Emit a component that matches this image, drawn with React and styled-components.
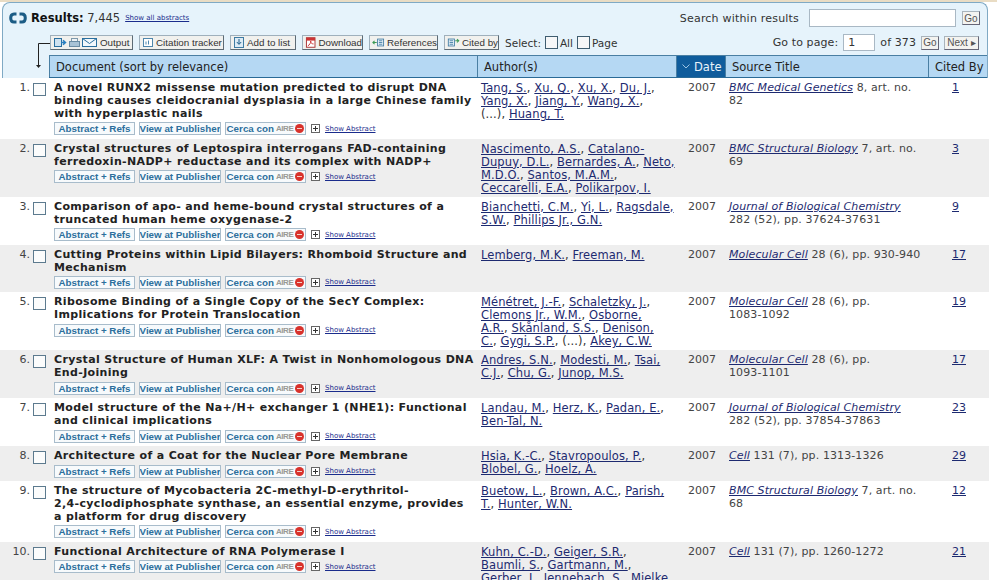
import React from 'react'
import styled, { createGlobalStyle } from 'styled-components'

const Global = createGlobalStyle`
  html, body { margin: 0; padding: 0; background: #fff; overflow: hidden; }
  body { font-family: "DejaVu Sans", Verdana, sans-serif; font-size: 11px; color: #333; }
`

const Page = styled.div`
  width: 997px;
  height: 580px;
  overflow: hidden;
  border-top: 2px solid #e9dcc4;
  box-sizing: border-box;
`

const Panel = styled.div`
  width: 986px;
  margin-left: 2px;
  background: #e6f3fb;
  border: 1px solid #7fa9c4;
  border-bottom: none;
  border-radius: 8px 8px 0 0;
  box-sizing: border-box;
`

const TopBar = styled.div`
  height: 28px;
  display: flex;
  align-items: center;
  justify-content: space-between;
  padding: 2px 7px 0 6px;
  box-sizing: border-box;
`

const ResultInfo = styled.div`
  display: flex;
  align-items: center;
  font-size: 11.5px;
  gap: 4px;
  b { color: #111; }
`

const TinyLink = styled.a`
  font-size: 7px;
  color: #1a2c8c;
  text-decoration: underline;
  margin-left: 1px;
`

const SearchBox = styled.div`
  display: flex;
  align-items: center;
  gap: 6px;
  letter-spacing: 0.2px;
`

const Input = styled.span`
  display: block;
  width: ${p => p.$w}px;
  height: ${p => p.$h || 17}px;
  margin-left: ${p => p.$ml || 0}px;
  background: #fff;
  border: 1px solid #a9b8c4;
  box-sizing: border-box;
  font-size: 11px;
  line-height: 16px;
  padding-left: 4px;
`

const SmallBtn = styled.span`
  display: inline-flex;
  align-items: center;
  justify-content: center;
  gap: 2px;
  width: ${p => p.$w}px;
  height: 14px;
  background: #f3f3f0;
  border: 1px solid #a9b4bc;
  border-right-color: #667;
  border-bottom-color: #667;
  font-family: "Liberation Sans", Arial, sans-serif;
  font-size: 10px;
  letter-spacing: 0;
  color: #555;
  box-sizing: border-box;
`

const ToolBar = styled.div`
  height: 23px;
  display: flex;
  align-items: center;
  justify-content: space-between;
  padding: 0 8px 0 47px;
  box-sizing: border-box;
`

const ToolGroup = styled.div`
  display: flex;
  align-items: center;
  gap: ${p => p.$gap}px;
  letter-spacing: ${p => p.$track || 0}px;
`

const ToolBtn = styled.span`
  display: inline-flex;
  align-items: center;
  gap: 2px;
  width: ${p => p.$w}px;
  height: 15px;
  padding-left: 2px;
  background: #f1f1ee;
  border: 1px solid #9fb0bc;
  border-right-color: #5d6b75;
  border-bottom-color: #5d6b75;
  box-sizing: border-box;
  font-family: "Liberation Sans", Arial, sans-serif;
  font-size: 9.8px;
  color: #333;
  white-space: nowrap;
  overflow: hidden;
`

const Check = styled.span`
  display: inline-block;
  width: 13px;
  height: 13px;
  background: #f6f7f8;
  border: 1px solid #3f5d70;
  box-sizing: border-box;
`

const SelectLabel = styled.span`
  display: flex;
  align-items: center;
  gap: 2px;
  font-size: 10.5px;
`

const SelectCheck = styled(Check)`
  margin-left: 2px;
`

const HeadRow = styled.div`
  position: relative;
  display: grid;
  grid-template-columns: 46px 428px 199px 49px 203px 1fr;
  height: 21px;
  border-top: 1px solid #4a7fa3;
  border-bottom: 1px solid #2a6a96;
  margin-top: 1px;
  font-size: 11.5px;
  color: #222;
`

const HeadSpacer = styled.div`
  background: #e6f3fb;
  margin-top: -1px;
  margin-bottom: -1px;
`

const HeadCell = styled.div`
  display: flex;
  align-items: center;
  background: ${p => (p.$active ? '#0f5c9c' : '#b5d8f3')};
  color: ${p => (p.$active ? '#e9f3fa' : '#222')};
  padding-left: ${p => p.$pad ?? 6}px;
  border-left: 1px solid #4a7fa3;
  gap: 4px;
  white-space: nowrap;
`

const ArrowMark = styled.svg`
  position: absolute;
  left: 27px;
  top: -14px;
`

const Row = styled.div`
  display: grid;
  grid-template-columns: 30px 24px 427px 196px 48px 204px 1fr;
  background: ${p => (p.$alt ? '#eeeeee' : '#fff')};
  padding: 4px 0 2px;
  width: 989px;
`

const Num = styled.div`
  text-align: right;
  line-height: 12.95px;
  font-size: 11px;
  color: #444;
`

const BoxCell = styled.div`
  padding: 1px 0 0 3px;
`

const RowCheck = styled(Check)`
  background: #fbfcfc;
  border-color: #5c7a8e;
`

const Title = styled.div`
  font-weight: bold;
  font-size: 11px;
  line-height: 12.95px;
  color: #222;
  letter-spacing: 0.34px;
  white-space: pre-line;
`

const Links = styled.div`
  display: flex;
  align-items: center;
  height: 16px;
  gap: 4px;
`

const LinkBtn = styled.span`
  display: inline-flex;
  align-items: center;
  justify-content: center;
  gap: 2px;
  height: 13px;
  width: ${p => p.$w}px;
  background: #f7fafc;
  border: 1px solid #a8bccb;
  box-sizing: border-box;
  font-family: "Liberation Sans", Arial, sans-serif;
  font-size: 9.8px;
  font-weight: bold;
  color: #2c6f9c;
  white-space: nowrap;
  overflow: hidden;
`

const AireMark = styled.span`
  font-size: 8px;
  font-weight: bold;
  color: #9a9a96;
  letter-spacing: -0.4px;
`

const RedDot = styled.span`
  position: relative;
  display: inline-block;
  width: 9px;
  height: 9px;
  border-radius: 50%;
  background: #d8322c;
  box-sizing: border-box;
  &::after {
    content: "";
    position: absolute;
    left: 2px;
    right: 2px;
    top: 4px;
    height: 1px;
    background: #f6d0c8;
  }
`

const Plus = styled.span`
  display: inline-block;
  width: 9px;
  height: 9px;
  border: 1px solid #666;
  box-sizing: border-box;
  margin-left: 1px;
  background:
    linear-gradient(#333, #333) center / 5px 1px no-repeat,
    linear-gradient(#333, #333) center / 1px 5px no-repeat,
    #fff;
`

const Authors = styled.div`
  line-height: 12.95px;
  font-size: 11.5px;
  letter-spacing: 0.1px;
  color: #333;
  white-space: pre;
`

const A = styled.a`
  color: #1d2a70;
  text-decoration: underline;
`

const Year = styled.div`
  line-height: 12.95px;
  padding-left: 11px;
  color: #444;
`

const Source = styled.div`
  line-height: 12.95px;
  color: #444;
  padding-left: 4px;
  letter-spacing: 0.1px;
  white-space: pre-line;
  i { color: #1d2a70; text-decoration: underline; }
`

const Cited = styled.div`
  line-height: 12.95px;
  padding-left: 23px;
`

const OutputIcons = () => (
  <svg width="45" height="11" viewBox="0 0 45 11">
    <rect x="1.5" y="1.5" width="7" height="8" fill="#cfe2f0" stroke="#2a6f9f" />
    <path d="M8 5.5h4M10 3.2l2.5 2.3L10 7.8" fill="none" stroke="#2a7fbf" strokeWidth="1.5" />
    <rect x="18.5" y="1.5" width="6" height="3" fill="#eef3f6" stroke="#7d98ab" />
    <rect x="16.5" y="4.5" width="10" height="5" fill="#a9c3d6" stroke="#6a8ca4" />
    <rect x="29.5" y="1.5" width="14" height="8" fill="#f2f8fc" stroke="#2a6f9f" />
    <path d="M29.5 1.5l7 5 7-5" fill="none" stroke="#2a6f9f" />
  </svg>
)

const TrackerIcon = () => (
  <svg width="12" height="11" viewBox="0 0 12 11">
    <rect x="1.5" y="1.5" width="9" height="8" fill="#fff" stroke="#4f87ad" />
    <path d="M4 7.5v-3M6.5 7.5v-4" stroke="#4f87ad" />
  </svg>
)

const ListIcon = () => (
  <svg width="12" height="13" viewBox="0 0 12 13">
    <rect x="1.5" y="1.5" width="9" height="10" fill="#dcebf5" stroke="#3f7ba3" />
    <path d="M6 3v5M3.8 6l2.2 2.4L8.2 6" fill="none" stroke="#1f5f8c" />
  </svg>
)

const PdfIcon = () => (
  <svg width="12" height="13" viewBox="0 0 12 13">
    <rect x="1.5" y="1.5" width="9" height="10" fill="#fff" stroke="#a33" />
    <rect x="1.5" y="1.5" width="9" height="3" fill="#c33" />
    <path d="M3 10c2-1 3-3 3-5 0 2 1 3 3 3" fill="none" stroke="#c33" />
  </svg>
)

const RefsIcon = () => (
  <svg width="15" height="11" viewBox="0 0 15 11">
    <rect x="6.5" y="1.5" width="7" height="8" fill="#eaf3f9" stroke="#3f7ba3" />
    <path d="M8 3.5h4M8 5.5h4M8 7.5h4" stroke="#3f7ba3" />
    <path d="M5.5 5.5H1M3 3.5l-2 2 2 2" fill="none" stroke="#3c9a55" strokeWidth="1.2" />
  </svg>
)

const CitedIcon = () => (
  <svg width="15" height="11" viewBox="0 0 15 11">
    <rect x="1.5" y="1.5" width="7" height="8" fill="#eaf3f9" stroke="#3f7ba3" />
    <path d="M3 3.5h4M3 5.5h4M3 7.5h4" stroke="#3f7ba3" />
    <path d="M9.5 3.5H13M11.5 1.5l2 2-2 2" fill="none" stroke="#3c9a55" strokeWidth="1.2" />
  </svg>
)

const LoopLogo = () => (
  <svg width="18" height="12" viewBox="0 0 18 12">
    <path d="M7.5 2H5Q1.7 2 1.7 6T5 10h2.5" fill="none" stroke="#1c5c85" strokeWidth="3" />
    <path d="M10.5 2H13q3.3 0 3.3 4T13 10h-2.5" fill="none" stroke="#1c5c85" strokeWidth="3" />
  </svg>
)

// line breaks are written into the names so each cell wraps where the list does
const rows = [
  {
    title: 'A novel RUNX2 missense mutation predicted to disrupt DNA binding causes cleidocranial dysplasia in a large Chinese family with hyperplastic nails',
    authors: ['Tang, S.', 'Xu, Q.', 'Xu, X.', 'Du, J.', '\nYang, X.', 'Jiang, Y.', 'Wang, X.', '\n(...)', 'Huang, T.'],
    journal: 'BMC Medical Genetics', rest: ' 8, art. no.\n82', cited: 1,
  },
  {
    title: 'Crystal structures of Leptospira interrogans FAD-containing ferredoxin-NADP+ reductase and its complex with NADP+',
    authors: ['Nascimento, A.S.', 'Catalano-\nDupuy, D.L.', 'Bernardes, A.', 'Neto,\nM.D.O.', 'Santos, M.A.M.', '\nCeccarelli, E.A.', 'Polikarpov, I.'],
    journal: 'BMC Structural Biology', rest: ' 7, art. no.\n69', cited: 3,
  },
  {
    title: 'Comparison of apo- and heme-bound crystal structures of a truncated human heme oxygenase-2',
    authors: ['Bianchetti, C.M.', 'Yi, L.', 'Ragsdale,\nS.W.', 'Phillips Jr., G.N.'],
    journal: 'Journal of Biological Chemistry', rest: '\n282 (52), pp. 37624-37631', cited: 9,
  },
  {
    title: 'Cutting Proteins within Lipid Bilayers: Rhomboid Structure and Mechanism',
    authors: ['Lemberg, M.K.', 'Freeman, M.'],
    journal: 'Molecular Cell', rest: ' 28 (6), pp. 930-940', cited: 17,
  },
  {
    title: 'Ribosome Binding of a Single Copy of the SecY Complex: Implications for Protein Translocation',
    authors: ['Ménétret, J.-F.', 'Schaletzky, J.', '\nClemons Jr., W.M.', 'Osborne,\nA.R.', 'Skånland, S.S.', 'Denison,\nC.', 'Gygi, S.P.', '(...)', 'Akey, C.W.'],
    journal: 'Molecular Cell', rest: ' 28 (6), pp.\n1083-1092', cited: 19,
  },
  {
    title: 'Crystal Structure of Human XLF: A Twist in Nonhomologous DNA End-Joining',
    authors: ['Andres, S.N.', 'Modesti, M.', 'Tsai,\nC.J.', 'Chu, G.', 'Junop, M.S.'],
    journal: 'Molecular Cell', rest: ' 28 (6), pp.\n1093-1101', cited: 17,
  },
  {
    title: 'Model structure of the Na+/H+ exchanger 1 (NHE1): Functional and clinical implications',
    authors: ['Landau, M.', 'Herz, K.', 'Padan, E.', '\nBen-Tal, N.'],
    journal: 'Journal of Biological Chemistry', rest: '\n282 (52), pp. 37854-37863', cited: 23,
  },
  {
    title: 'Architecture of a Coat for the Nuclear Pore Membrane',
    authors: ['Hsia, K.-C.', 'Stavropoulos, P.', '\nBlobel, G.', 'Hoelz, A.'],
    journal: 'Cell', rest: ' 131 (7), pp. 1313-1326', cited: 29,
  },
  {
    title: 'The structure of Mycobacteria 2C-methyl-D-erythritol-\n2,4-cyclodiphosphate synthase, an essential enzyme, provides\na platform for drug discovery',
    authors: ['Buetow, L.', 'Brown, A.C.', 'Parish,\nT.', 'Hunter, W.N.'],
    journal: 'BMC Structural Biology', rest: ' 7, art. no.\n68', cited: 12,
  },
  {
    title: 'Functional Architecture of RNA Polymerase I',
    authors: ['Kuhn, C.-D.', 'Geiger, S.R.', '\nBaumli, S.', 'Gartmann, M.', '\nGerber, J.', 'Jennebach, S.', 'Mielke,\nT.'],
    journal: 'Cell', rest: ' 131 (7), pp. 1260-1272', cited: 21,
  },
]

function AuthorName({ name }) {
  // a leading break sits outside the link, so it isn't underlined
  const lead = name.startsWith('\n') ? '\n' : ''
  const text = name.trim()
  return <>{lead}{text === '(...)' ? text : <A>{text}</A>}</>
}

function ResultRow({ row, index }) {
  return (
    <Row $alt={index % 2 === 1}>
      <Num>{index + 1}.</Num>
      <BoxCell><RowCheck /></BoxCell>
      <div>
        <Title>{row.title}</Title>
        <Links>
          <LinkBtn $w={81}>Abstract + Refs</LinkBtn>
          <LinkBtn $w={82}>View at Publisher</LinkBtn>
          <LinkBtn $w={81}>Cerca con <AireMark>AIRE</AireMark><RedDot /></LinkBtn>
          <Plus />
          <TinyLink>Show Abstract</TinyLink>
        </Links>
      </div>
      <Authors>
        {row.authors.map((a, i) => {
          const next = row.authors[i + 1]
          return (
            <React.Fragment key={a}>
              <AuthorName name={a} />
              {next ? (next.startsWith('\n') ? ',' : ', ') : ''}
            </React.Fragment>
          )
        })}
      </Authors>
      <Year>2007</Year>
      <Source><i>{row.journal}</i>{row.rest}</Source>
      <Cited><A>{row.cited}</A></Cited>
    </Row>
  )
}

export default function App() {
  return (
    <Page>
      <Global />
      <Panel>
        <TopBar>
          <ResultInfo>
            <LoopLogo />
            <span><b>Results:</b> 7,445</span>
            <TinyLink>Show all abstracts</TinyLink>
          </ResultInfo>
          <SearchBox>
            <span>Search within results</span>
            <Input $w={147} $h={18} $ml={4} />
            <SmallBtn $w={18}>Go</SmallBtn>
          </SearchBox>
        </TopBar>
        <ToolBar>
          <ToolGroup $gap={6}>
            <ToolBtn $w={83}><OutputIcons />Output</ToolBtn>
            <ToolBtn $w={85}><TrackerIcon />Citation tracker</ToolBtn>
            <ToolBtn $w={66}><ListIcon />Add to list</ToolBtn>
            <ToolBtn $w={61}><PdfIcon />Download</ToolBtn>
            <ToolBtn $w={69}><RefsIcon />References</ToolBtn>
            <ToolBtn $w={55}><CitedIcon />Cited by</ToolBtn>
            <SelectLabel>Select:<SelectCheck />All<SelectCheck />Page</SelectLabel>
          </ToolGroup>
          <ToolGroup $gap={5} $track={0.1}>
            <span>Go to page:</span>
            <Input $w={32}>1</Input>
            <span>of 373</span>
            <SmallBtn $w={18}>Go</SmallBtn>
            <SmallBtn $w={35}>Next ▸</SmallBtn>
          </ToolGroup>
        </ToolBar>
        <HeadRow>
          <HeadSpacer />
          <HeadCell>Document (sort by relevance)</HeadCell>
          <HeadCell>Author(s)</HeadCell>
          <HeadCell $active $pad={5}>
            <svg width="8" height="5" viewBox="0 0 8 5"><path d="M.5.5L4 4 7.5.5" fill="none" stroke="#9cc4e4" /></svg>
            Date
          </HeadCell>
          <HeadCell>Source Title</HeadCell>
          <HeadCell>Cited By</HeadCell>
          <ArrowMark width="22" height="28" viewBox="0 0 22 28">
            <path d="M20 1.5H8.5V24" fill="none" stroke="#222" />
            <path d="M6 23h5l-2.5 3z" fill="#222" />
          </ArrowMark>
        </HeadRow>
      </Panel>
      {rows.map((r, i) => <ResultRow key={r.title} row={r} index={i} />)}
    </Page>
  )
}
